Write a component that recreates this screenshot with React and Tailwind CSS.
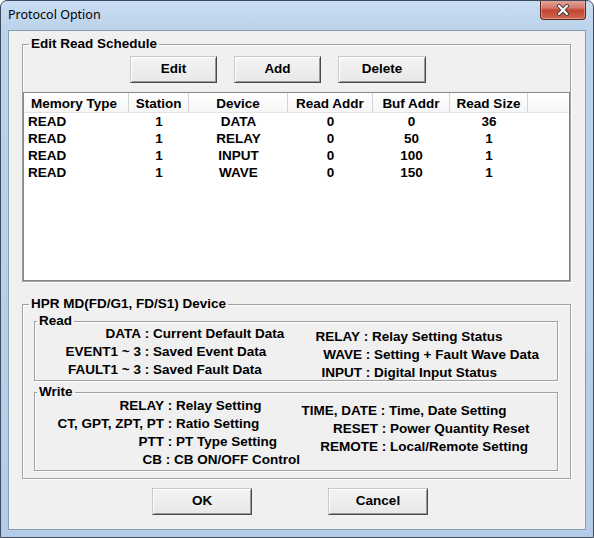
import React from "react";

function Btn({ children, w }) {
  return (
    <div
      className={
        "flex h-[27px] items-center justify-center border border-t-[#c8c8c8] border-l-[#c8c8c8] border-r-[#4a4a4a] border-b-[#4a4a4a] bg-[linear-gradient(#f4f4f4,#e8e8e8)] shadow-[inset_1px_1px_0_#ffffff,inset_-1px_-1px_0_#9a9a9a] text-black " +
        w
      }
    >
      {children}
    </div>
  );
}

function Row({ label, value, lw }) {
  return (
    <div className="flex h-[18px] items-center whitespace-nowrap leading-[18px]">
      <span className={"text-right " + lw}>{label}</span>
      <span>{"\u00a0:\u00a0" + value}</span>
    </div>
  );
}

const headers = ["Memory Type", "Station", "Device", "Read Addr", "Buf Addr", "Read Size"];
const rows = [
  ["READ", "1", "DATA", "0", "0", "36"],
  ["READ", "1", "RELAY", "0", "50", "1"],
  ["READ", "1", "INPUT", "0", "100", "1"],
  ["READ", "1", "WAVE", "0", "150", "1"],
];

export default function App() {
  return (
    <div className="w-[594px] h-[538px] overflow-hidden rounded-t-[7px] border border-[#3c4b5e] bg-[linear-gradient(180deg,#c9ddf2_0px,#bcd3ec_28px,#b4cce7_100%)] px-[7px] flex flex-col font-['Liberation_Sans',Arial,sans-serif]">
      {/* title bar */}
      <div className="h-[29px] flex items-start justify-between shrink-0">
        <div className="pt-[6px] text-[12.5px] leading-[16px] text-black font-['Noto_Sans',sans-serif] font-normal">
          Protocol Option
        </div>
        <div className="-mt-[1px] h-[20px] w-[46px] rounded-b-[4px] border border-t-0 border-[#5a2620] bg-[linear-gradient(180deg,#e6a89e_0%,#d47a6c_40%,#c24632_55%,#cf6a55_100%)] shadow-[inset_0_0_0_1px_rgba(255,200,190,0.45)] flex items-center justify-center">
          <svg width="14" height="12" viewBox="0 0 14 12">
            <path d="M3 2 L11 10 M11 2 L3 10" stroke="#4a3a3a" strokeWidth="4" strokeLinecap="round" />
            <path d="M3 2 L11 10 M11 2 L3 10" stroke="#ffffff" strokeWidth="2.2" strokeLinecap="round" />
          </svg>
        </div>
      </div>

      {/* client area */}
      <div className="h-[500px] shrink-0 border border-[#8b9bb0] bg-[#f0f0f0] pl-[13px] pr-[14px] flex flex-col text-[13.5px] font-bold text-black">
        {/* Edit Read Schedule */}
        <fieldset className="m-0 mt-[7px] h-[244px] p-0 border border-[#a0a0a0] shadow-[inset_1px_1px_0_#ffffff,1px_1px_0_#ffffff] flex flex-col">
          <legend className="ml-[6px] px-[2px] leading-[12px]">Edit Read Schedule</legend>
          <div className="mt-[6px] ml-[107px] flex gap-[17px]">
            <Btn w="w-[87px]">Edit</Btn>
            <Btn w="w-[87px]">Add</Btn>
            <Btn w="w-[88px]">Delete</Btn>
          </div>
          <div className="mt-[9px] h-[189px] border border-[#828790] bg-white">
            <div className="flex h-[20px] border-b border-[#e2e2e2] bg-[linear-gradient(#ffffff,#f6f6f6)]">
              {headers.map((h, i) => (
                <div
                  key={h}
                  className={
                    "h-full border-r border-[#d5d5d5] leading-[21px] " +
                    ["w-[105px] pl-[7px] text-left", "w-[60px] text-center", "w-[99px] text-center", "w-[85px] text-center", "w-[77px] text-center", "w-[78px] text-center"][i]
                  }
                >
                  {h}
                </div>
              ))}
            </div>
            {rows.map((r, ri) => (
              <div key={ri} className="flex h-[17px] leading-[17px]">
                {r.map((c, i) => (
                  <div
                    key={i}
                    className={
                      ["w-[105px] pl-[4px] text-left", "w-[60px] text-center", "w-[99px] text-center", "w-[85px] text-center", "w-[77px] text-center", "w-[78px] text-center"][i]
                    }
                  >
                    {c}
                  </div>
                ))}
              </div>
            ))}
          </div>
        </fieldset>

        {/* HPR MD Device */}
        <fieldset className="m-0 mt-[16px] h-[181px] p-0 border border-[#a0a0a0] shadow-[inset_1px_1px_0_#ffffff,1px_1px_0_#ffffff]">
          <legend className="ml-[6px] px-[2px] leading-[12px]">HPR MD(FD/G1, FD/S1) Device</legend>
          <div className="pl-[11px] pr-[12px] flex flex-col">
            <fieldset className="m-0 mt-[5px] h-[66px] p-0 border border-[#a0a0a0] shadow-[inset_1px_1px_0_#ffffff,1px_1px_0_#ffffff] grid grid-cols-[265px_1fr] items-start">
              <legend className="ml-[2px] px-[2px] leading-[12px]">Read</legend>
              <div className="-mt-[2px] flex flex-col">
                <Row lw="w-[106px]" label="DATA" value="Current Default Data" />
                <Row lw="w-[106px]" label="EVENT1 ~ 3" value="Saved Event Data" />
                <Row lw="w-[106px]" label="FAULT1 ~ 3" value="Saved Fault Data" />
              </div>
              <div className="mt-[1px] flex flex-col">
                <Row lw="w-[60px]" label="RELAY" value="Relay Setting Status" />
                <Row lw="w-[62px]" label="WAVE" value="Setting + Fault Wave Data" />
                <Row lw="w-[62px]" label="INPUT" value="Digital Input Status" />
              </div>
            </fieldset>
            <fieldset className="m-0 mt-[5px] h-[85px] p-0 border border-[#a0a0a0] shadow-[inset_1px_1px_0_#ffffff,1px_1px_0_#ffffff] grid grid-cols-[265px_1fr] items-start">
              <legend className="ml-[2px] px-[2px] leading-[12px]">Write</legend>
              <div className="-mt-[1px] flex flex-col">
                <Row lw="w-[129px]" label="RELAY" value="Relay Setting" />
                <Row lw="w-[129px]" label="CT, GPT, ZPT, PT" value="Ratio Setting" />
                <Row lw="w-[129px]" label="PTT" value="PT Type Setting" />
                <Row lw="w-[129px]" label="CB" value="CB ON/OFF Control" />
              </div>
              <div className="mt-[4px] flex flex-col">
                <Row lw="w-[77px]" label="TIME, DATE" value="Time, Date Setting" />
                <Row lw="w-[78px]" label="RESET" value="Power Quantity Reset" />
                <Row lw="w-[78px]" label="REMOTE" value="Local/Remote Setting" />
              </div>
            </fieldset>
          </div>
        </fieldset>

        {/* OK / Cancel */}
        <div className="mt-[9px] ml-[130px] flex gap-[76px]">
          <Btn w="w-[100px]">OK</Btn>
          <Btn w="w-[100px]">Cancel</Btn>
        </div>
      </div>
    </div>
  );
}
